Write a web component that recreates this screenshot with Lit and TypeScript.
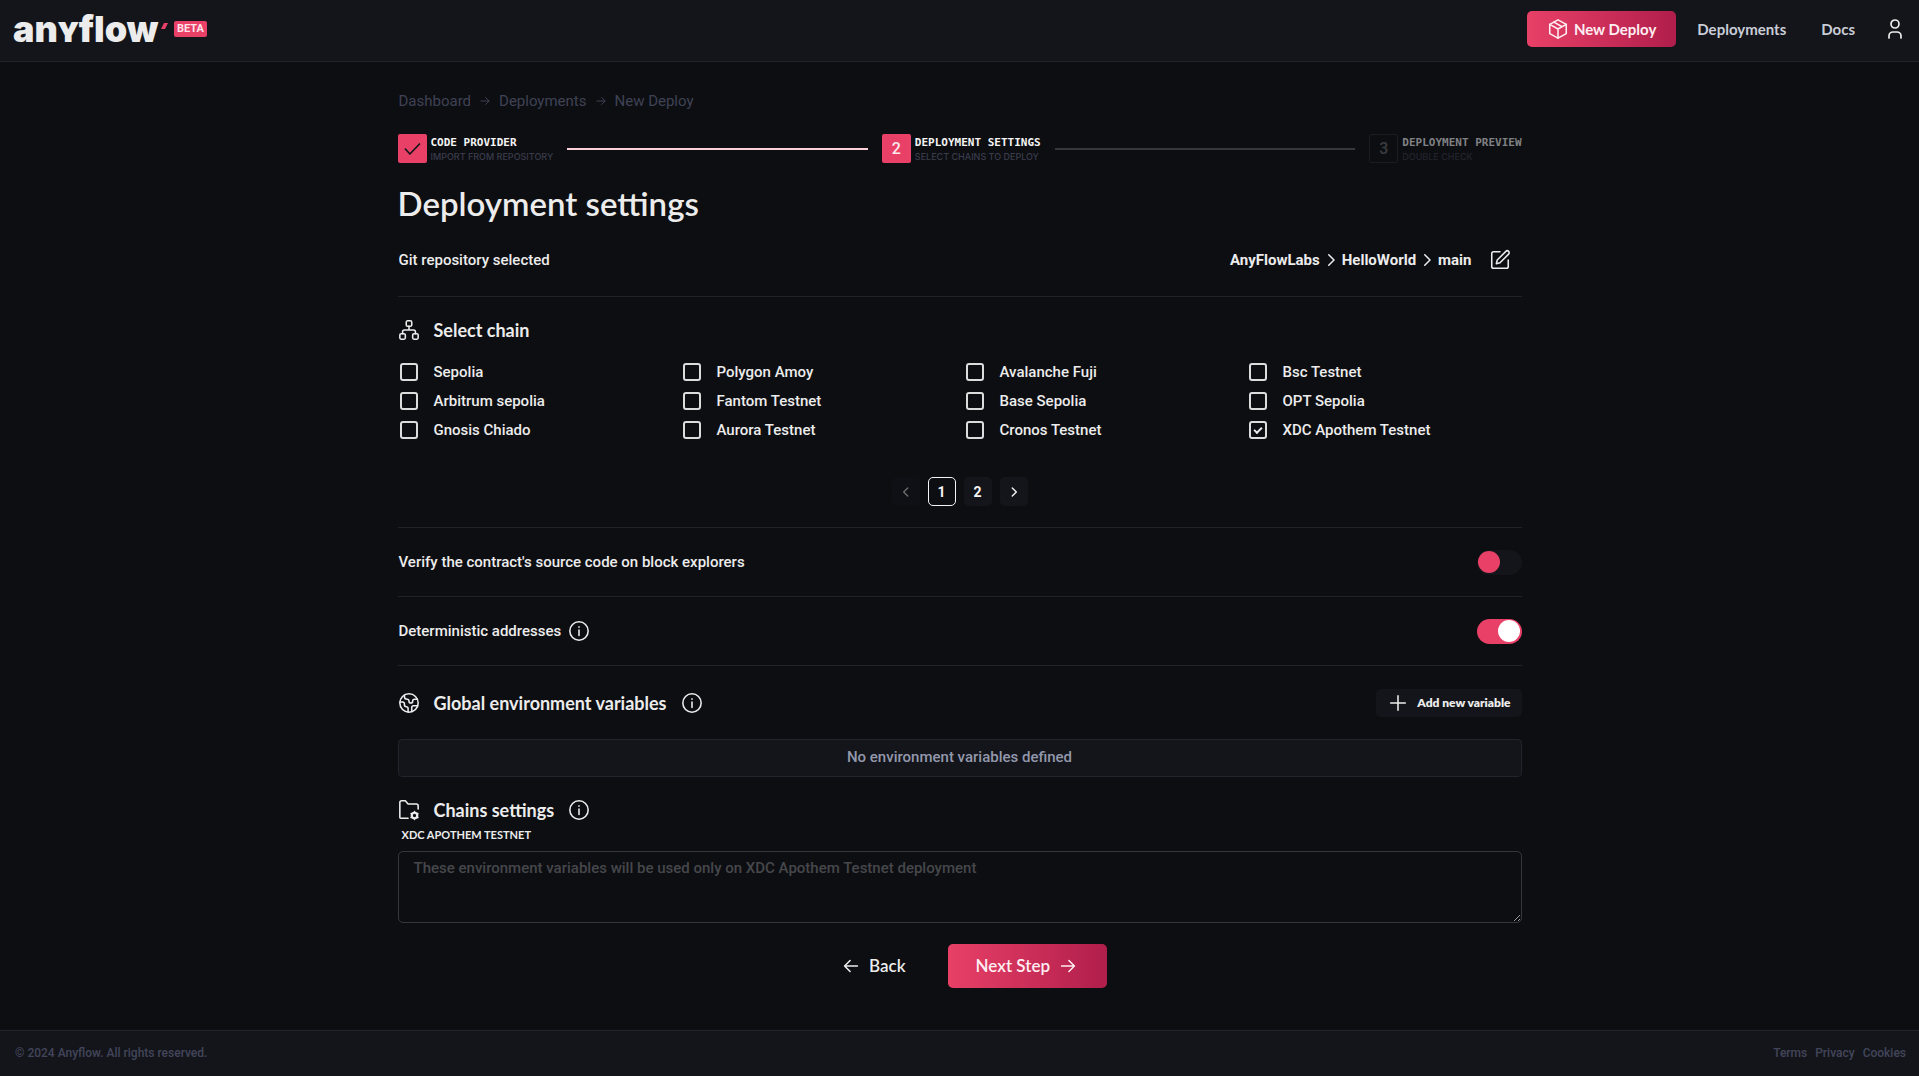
import { LitElement, html, css, svg } from "lit";
import { customElement, state } from "lit/decorators.js";
import { classMap } from "lit/directives/class-map.js";

const glyphs = {
  package: svg`<path d="M12 2l9 5v10l-9 5-9-5V7z"/><path d="M3 7l9 5 9-5M12 12v10M7.500 4.500l9 5"/>`,
  user: svg`<circle cx="12" cy="7" r="4"/><path d="M6 21v-2a4 4 0 0 1 4-4h4a4 4 0 0 1 4 4v2"/>`,
  arrowRight: svg`<path d="M5 12h14M13 6l6 6-6 6"/>`,
  arrowLeft: svg`<path d="M19 12H5M11 6l-6 6 6 6"/>`,
  check: svg`<path d="M4 12l5.500 6L21 6"/>`,
  chevronRight: svg`<path d="M9 5l7 7-7 7"/>`,
  chevronLeft: svg`<path d="M15 5l-7 7 7 7"/>`,
  edit: svg`<path d="M12 3H5a2 2 0 0 0-2 2v14a2 2 0 0 0 2 2h14a2 2 0 0 0 2-2v-7"/><path d="M18.400 2.600a2.100 2.100 0 0 1 3 3L12 15l-4 1 1-4z"/>`,
  sitemap: svg`<rect x="9" y="2" width="6" height="6" rx="1.500"/><rect x="2" y="16" width="6" height="6" rx="1.500"/><rect x="16" y="16" width="6" height="6" rx="1.500"/><path d="M5 16v-2a2 2 0 0 1 2-2h10a2 2 0 0 1 2 2v2M12 8v4"/>`,
  info: svg`<circle cx="12" cy="12" r="10"/><path d="M12 11v6M12 7.500v.5"/>`,
  earth: svg`<circle cx="12" cy="12" r="10"/><path d="M21.540 15H17a2 2 0 0 0-2 2v4.540M7 3.340V5a3 3 0 0 0 3 3a2 2 0 0 1 2 2c0 1.100.9 2 2 2a2 2 0 0 0 2-2c0-1.100.9-2 2-2h3.170M11 21.950V18a2 2 0 0 0-2-2a2 2 0 0 1-2-2v-1a2 2 0 0 0-2-2H2.050"/>`,
  folder: svg`<path d="M11 21H3a1 1 0 0 1-1-1V4a2 2 0 0 1 2-2h4l3 3.500h9a2 2 0 0 1 2 2V11"/><circle cx="18" cy="18" r="3" stroke-width="2.400"/><path d="M18 13.700v1M18 21.300v1M14.300 15.850l.8.500M20.900 19.650l.8.500M14.300 20.150l.8-.5M20.900 16.350l.8-.5"/>`,
  plus: svg`<path d="M12 4v16M4 12h16"/>`,
};

const icon = (name: keyof typeof glyphs, cls = "") => html`
  <svg class="icon ${cls}" viewBox="0 0 24 24" aria-hidden="true">${glyphs[name]}</svg>`;

const CHAINS = [
  "Sepolia", "Polygon Amoy", "Avalanche Fuji", "Bsc Testnet",
  "Arbitrum sepolia", "Fantom Testnet", "Base Sepolia", "OPT Sepolia",
  "Gnosis Chiado", "Aurora Testnet", "Cronos Testnet", "XDC Apothem Testnet",
];

const STEPS = [
  { title: "CODE PROVIDER", note: "IMPORT FROM REPOSITORY", status: "done" },
  { title: "DEPLOYMENT SETTINGS", note: "SELECT CHAINS TO DEPLOY", status: "current" },
  { title: "DEPLOYMENT PREVIEW", note: "DOUBLE CHECK", status: "todo" },
];

@customElement("app-root")
export class AppRoot extends LitElement {
  @state() private selected = new Set<string>(["XDC Apothem Testnet"]);

  static styles = css`
    :host {
      display: flex;
      flex-direction: column;
      min-height: 100vh;
      background: #0d0e12;
      color: #ececec;
      font: 500 15px/24px Roboto, "Liberation Sans", sans-serif;
    }
    * { box-sizing: border-box; }
    a { color: inherit; text-decoration: none; }
    button { font: inherit; color: inherit; border: 0; background: none; padding: 0; cursor: pointer; }
    .display, h1, h2 { font-family: Lato, "Open Sans", sans-serif; }
    .icon {
      width: 22px;
      height: 22px;
      flex: none;
      display: block;
      fill: none;
      stroke: currentColor;
      stroke-width: 1.7;
      stroke-linecap: round;
      stroke-linejoin: round;
    }
    .icon.user { width: 24px; height: 24px; }
    .icon.small { width: 14px; height: 14px; stroke-width: 2.4; }
    .icon.separator { width: 18px; height: 18px; stroke-width: 2; }
    .icon.crumb { width: 14px; height: 14px; }

    .top {
      display: flex;
      align-items: center;
      justify-content: space-between;
      height: 62px;
      padding: 0 5px 4px 14px;
      background: #14151a;
      border-bottom: 1px solid #22232b;
    }
    .brand { display: flex; align-items: center; gap: 6px; }
    .logo { display: block; width: 154px; height: 52px; overflow: visible; }
    .logo-text { font: 900 36px/48px Inter, sans-serif; fill: #ececec; }
    .logo-y { font-variant-caps: small-caps; }
    .beta {
      padding: 0 3px;
      border-radius: 2px;
      background: #e84067;
      color: #ffe3ea;
      font-size: 11px;
      font-weight: 700;
      line-height: 16px;
    }
    .nav { display: flex; align-items: center; gap: 7px; font-size: 15px; font-weight: 700; color: #c9cdd8; }
    .nav a { padding: 0 14px; }
    .nav .user-button { padding: 0 7px; color: #ececec; }
    .primary {
      display: flex;
      align-items: center;
      justify-content: center;
      background: linear-gradient(90deg, #e84067, #b01e4b);
      color: #ffeef2;
      border-radius: 5px;
    }
    .nav .primary { height: 36px; gap: 5px; padding: 0 20px; }

    main {
      flex: 1;
      width: 100%;
      max-width: 1156px;
      margin: 0 auto;
      padding: 29px 16px 42px;
    }
    .crumbs { display: flex; align-items: center; gap: 7px; padding-left: 1px; line-height: 20px; font-weight: 400; color: #3f4255; }
    .stepper { display: flex; align-items: center; gap: 14px; margin: 23px 0 0; padding: 0; list-style: none; }
    .step { display: flex; align-items: center; gap: 4px; }
    .mark {
      display: grid;
      place-items: center;
      width: 29px;
      height: 29px;
      border-radius: 2px;
      background: #e84067;
      color: #ffe9ee;
      font-size: 16px;
    }
    .mark .icon { width: 20px; height: 20px; color: #14151a; stroke-width: 2; }
    .step-text { display: grid; }
    .step-title { font: 700 11px/15px "DejaVu Sans Mono", monospace; color: #f4f4f4; }
    .step-note { font-family: Inter, sans-serif; font-size: 9px; line-height: 13px; color: #3a3c4b; }
    .todo .mark { background: none; border: 1px solid #1b1c21; color: #3b3c40; }
    .todo .step-title { color: #808184; }
    .todo .step-note { color: #23242d; }
    .line { flex: 1; height: 2px; background: #fbd0d8; }
    .line.pending { background: #36373b; }

    h1 { margin: 20px 0 0; font-size: 33px; line-height: 40px; font-weight: 600; }
    h2 { margin: 0; font-size: 18px; line-height: 24px; font-weight: 700; }
    .row { display: flex; align-items: center; justify-content: space-between; height: 69px; padding-left: 1px; border-bottom: 1px solid #22232a; }
    .row.repo { height: 74px; }
    .repo-path { display: flex; align-items: center; gap: 2px; font-weight: 700; }
    .repo-path button { margin: 0 11px 0 15px; }
    .section-title { display: flex; align-items: center; gap: 14px; }
    .chains { padding: 21px 0; border-bottom: 1px solid #22232a; }
    .chain-grid { display: grid; grid-template-columns: repeat(4, 1fr); gap: 5px 8px; margin-top: 18px; }
    .chain { display: flex; align-items: center; gap: 16px; padding-left: 2px; }
    .chain input {
      appearance: none;
      display: grid;
      place-items: center;
      flex: none;
      width: 18px;
      height: 18px;
      margin: 0;
      border: 2px solid #dcdcdc;
      border-radius: 3px;
    }
    .chain input:checked::before {
      content: "";
      width: 6px;
      height: 3px;
      border: solid #ececec;
      border-width: 0 0 2px 2px;
      transform: translateY(-1px) rotate(-45deg);
    }
    .pages { display: flex; justify-content: center; gap: 8px; margin-top: 35px; }
    .pages button {
      display: grid;
      place-items: center;
      width: 28px;
      height: 29px;
      border-radius: 5px;
      background: #14151a;
      color: #f4f4f4;
      font-size: 14px;
      font-weight: 700;
    }
    .pages .active { border: 1px solid #f4f4f4; background: none; }
    .pages button:disabled { opacity: 0.4; }
    .with-info { display: flex; align-items: center; gap: 7px; }
    .switch {
      appearance: none;
      display: flex;
      align-items: center;
      width: 45px;
      height: 25px;
      margin: 0;
      padding: 0 1px;
      border-radius: 13px;
      background: #14151a;
    }
    .switch::before { content: ""; width: 22px; height: 22px; border-radius: 50%; background: #e84067; }
    .switch:checked { justify-content: flex-end; padding-right: 2px; background: #e84067; }
    .switch:checked::before { background: #fff; }
    .section-head { display: flex; align-items: center; justify-content: space-between; margin-top: 23px; height: 28px; }
    .add {
      display: flex;
      align-items: center;
      gap: 8px;
      height: 28px;
      padding: 0 11px;
      border-radius: 5px;
      background: #14151a;
      font-size: 12px;
      font-weight: 800;
    }
    .empty {
      margin-top: 22px;
      padding: 0 16px 2px;
      border: 1px solid #22232c;
      border-radius: 4px;
      background: #14151a;
      color: #9398ac;
      line-height: 34px;
      text-align: center;
    }
    .chain-settings { margin-top: 21px; }
    .env-label { display: block; margin: 5px 0 8px 4px; font-size: 11px; line-height: 16px; font-weight: 700; text-transform: uppercase; }
    textarea {
      display: block;
      width: 100%;
      height: 72px;
      padding: 4px 15px;
      border: 1px solid #36373b;
      border-radius: 5px;
      background: none;
      color: inherit;
      font: inherit;
      resize: vertical;
    }
    textarea::placeholder { color: #46474b; }
    .actions { display: flex; justify-content: center; gap: 14px; margin-top: 21px; font-size: 17px; font-weight: 600; }
    .actions button { display: flex; align-items: center; gap: 7px; height: 44px; padding: 0 28px; }

    footer {
      display: flex;
      align-items: center;
      justify-content: space-between;
      height: 46px;
      padding: 0 13px 2px 15px;
      border-top: 1px solid #22232b;
      background: #14151a;
      color: #42455a;
      font-size: 12px;
    }
    .legal { display: flex; gap: 8px; }
  `;

  private toggleChain(name: string) {
    const next = new Set(this.selected);
    next.has(name) ? next.delete(name) : next.add(name);
    this.selected = next;
  }

  private renderStep(step: (typeof STEPS)[number], index: number) {
    return html`
      ${index ? html`<li class=${classMap({ line: true, pending: index > 1 })} aria-hidden="true"></li>` : ""}
      <li class="step ${step.status}">
        <span class="mark">${step.status === "done" ? icon("check") : index + 1}</span>
        <span class="step-text">
          <span class="step-title">${step.title}</span>
          <span class="step-note">${step.note}</span>
        </span>
      </li>`;
  }

  render() {
    return html`
      <header class="top">
        <a class="brand" href="#">
          <svg class="logo" viewBox="0 0 154 52" role="img" aria-label="anyflow">
            <text class="logo-text" x="-1" y="39">an<tspan class="logo-y">y</tspan>flow</text>
            <path d="M150 20h4l-3 6h-4z" fill="#e84067"/>
          </svg>
          <span class="beta">BETA</span>
        </a>
        <nav class="nav display">
          <button class="primary">${icon("package")}New Deploy</button>
          <a href="#deployments">Deployments</a>
          <a href="#docs">Docs</a>
          <button class="user-button" aria-label="Account">${icon("user", "user")}</button>
        </nav>
      </header>

      <main>
        <nav class="crumbs" aria-label="Breadcrumb">
          <a href="#dashboard">Dashboard</a>${icon("arrowRight", "crumb")}
          <a href="#deployments">Deployments</a>${icon("arrowRight", "crumb")}
          <a href="#new">New Deploy</a>
        </nav>
        <ol class="stepper">${STEPS.map((s, i) => this.renderStep(s, i))}</ol>

        <h1>Deployment settings</h1>
        <div class="row repo">
          <span>Git repository selected</span>
          <div class="repo-path">
            <span>AnyFlowLabs</span>${icon("chevronRight", "separator")}
            <span>HelloWorld</span>${icon("chevronRight", "separator")}
            <span>main</span>
            <button aria-label="Edit repository">${icon("edit")}</button>
          </div>
        </div>

        <section class="chains">
          <div class="section-title">${icon("sitemap")}<h2>Select chain</h2></div>
          <div class="chain-grid">
            ${CHAINS.map((name) => html`
              <label class="chain">
                <input type="checkbox" .checked=${this.selected.has(name)} @change=${() => this.toggleChain(name)} />
                ${name}
              </label>`)}
          </div>
          <nav class="pages" aria-label="Chain pages">
            <button disabled aria-label="Previous page">${icon("chevronLeft", "small")}</button>
            <button class="active" aria-current="page">1</button>
            <button>2</button>
            <button aria-label="Next page">${icon("chevronRight", "small")}</button>
          </nav>
        </section>

        <div class="row">
          <label for="verify">Verify the contract's source code on block explorers</label>
          <input class="switch" id="verify" type="checkbox" role="switch" />
        </div>
        <div class="row">
          <span class="with-info"><label for="deterministic">Deterministic addresses</label>${icon("info")}</span>
          <input class="switch" id="deterministic" type="checkbox" role="switch" checked />
        </div>

        <section>
          <div class="section-head">
            <div class="section-title">${icon("earth")}<h2>Global environment variables</h2>${icon("info")}</div>
            <button class="add display">${icon("plus")}Add new variable</button>
          </div>
          <div class="empty">No environment variables defined</div>
        </section>

        <section class="chain-settings">
          <div class="section-title">${icon("folder")}<h2>Chains settings</h2>${icon("info")}</div>
          ${[...this.selected].map((name) => {
            const id = `env-${name.toLowerCase().replace(/\s+/g, "-")}`;
            return html`
              <label class="env-label display" for=${id}>${name}</label>
              <textarea id=${id} placeholder="These environment variables will be used only on ${name} deployment"></textarea>`;
          })}
        </section>

        <div class="actions display">
          <button>${icon("arrowLeft")}Back</button>
          <button class="primary">Next Step${icon("arrowRight")}</button>
        </div>
      </main>

      <footer>
        <span>© 2024 Anyflow. All rights reserved.</span>
        <nav class="legal" aria-label="Legal">
          <a href="#terms">Terms</a><a href="#privacy">Privacy</a><a href="#cookies">Cookies</a>
        </nav>
      </footer>
    `;
  }
}
